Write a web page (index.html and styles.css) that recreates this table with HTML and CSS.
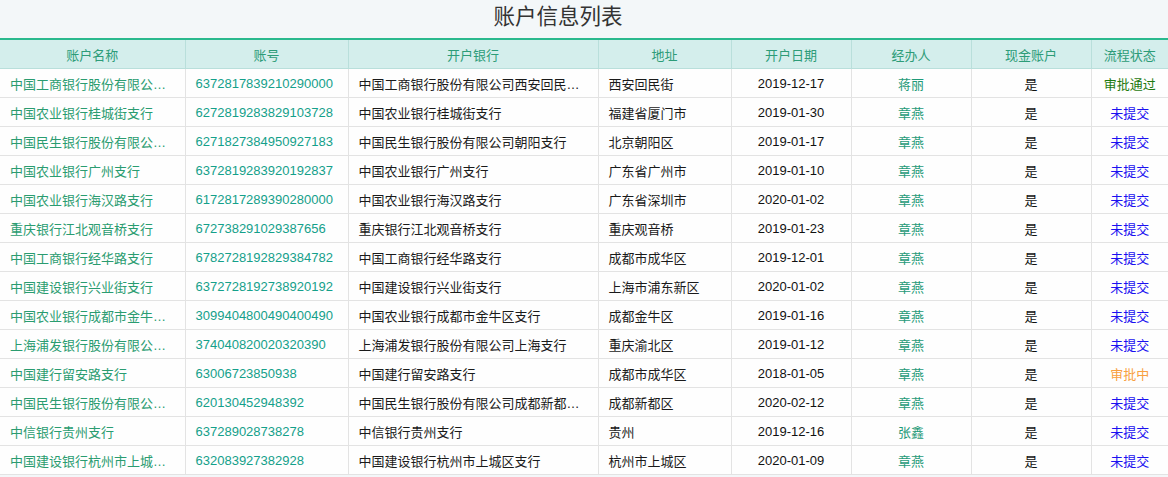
FILE: index.html
```html
<!DOCTYPE html>
<html lang="zh-CN">
<head>
<meta charset="utf-8">
<title>账户信息列表</title>
<link rel="stylesheet" href="styles.css">
</head>
<body>
<div class="page">
  <h1 class="title">账户信息列表</h1>
  <table class="grid">
    <colgroup>
      <col class="c1"><col class="c2"><col class="c3"><col class="c4"><col class="c5"><col class="c6"><col class="c7"><col class="c8">
    </colgroup>
    <thead>
      <tr>
        <th>账户名称</th><th>账号</th><th>开户银行</th><th>地址</th><th>开户日期</th><th>经办人</th><th>现金账户</th><th>流程状态</th>
      </tr>
    </thead>
    <tbody>
      <tr><td class="name">中国工商银行股份有限公司西安回民街支行</td><td class="acct">6372817839210290000</td><td class="bank">中国工商银行股份有限公司西安回民街支行</td><td class="addr">西安回民街</td><td class="date">2019-12-17</td><td class="person">蒋丽</td><td class="cash">是</td><td class="status ok">审批通过</td></tr>
      <tr><td class="name">中国农业银行桂城街支行</td><td class="acct">6272819283829103728</td><td class="bank">中国农业银行桂城街支行</td><td class="addr">福建省厦门市</td><td class="date">2019-01-30</td><td class="person">章燕</td><td class="cash">是</td><td class="status todo">未提交</td></tr>
      <tr><td class="name">中国民生银行股份有限公司朝阳支行</td><td class="acct">6271827384950927183</td><td class="bank">中国民生银行股份有限公司朝阳支行</td><td class="addr">北京朝阳区</td><td class="date">2019-01-17</td><td class="person">章燕</td><td class="cash">是</td><td class="status todo">未提交</td></tr>
      <tr><td class="name">中国农业银行广州支行</td><td class="acct">6372819283920192837</td><td class="bank">中国农业银行广州支行</td><td class="addr">广东省广州市</td><td class="date">2019-01-10</td><td class="person">章燕</td><td class="cash">是</td><td class="status todo">未提交</td></tr>
      <tr><td class="name">中国农业银行海汉路支行</td><td class="acct">6172817289390280000</td><td class="bank">中国农业银行海汉路支行</td><td class="addr">广东省深圳市</td><td class="date">2020-01-02</td><td class="person">章燕</td><td class="cash">是</td><td class="status todo">未提交</td></tr>
      <tr><td class="name">重庆银行江北观音桥支行</td><td class="acct">672738291029387656</td><td class="bank">重庆银行江北观音桥支行</td><td class="addr">重庆观音桥</td><td class="date">2019-01-23</td><td class="person">章燕</td><td class="cash">是</td><td class="status todo">未提交</td></tr>
      <tr><td class="name">中国工商银行经华路支行</td><td class="acct">6782728192829384782</td><td class="bank">中国工商银行经华路支行</td><td class="addr">成都市成华区</td><td class="date">2019-12-01</td><td class="person">章燕</td><td class="cash">是</td><td class="status todo">未提交</td></tr>
      <tr><td class="name">中国建设银行兴业街支行</td><td class="acct">6372728192738920192</td><td class="bank">中国建设银行兴业街支行</td><td class="addr">上海市浦东新区</td><td class="date">2020-01-02</td><td class="person">章燕</td><td class="cash">是</td><td class="status todo">未提交</td></tr>
      <tr><td class="name">中国农业银行成都市金牛区支行</td><td class="acct">3099404800490400490</td><td class="bank">中国农业银行成都市金牛区支行</td><td class="addr">成都金牛区</td><td class="date">2019-01-16</td><td class="person">章燕</td><td class="cash">是</td><td class="status todo">未提交</td></tr>
      <tr><td class="name">上海浦发银行股份有限公司上海支行</td><td class="acct">374040820020320390</td><td class="bank">上海浦发银行股份有限公司上海支行</td><td class="addr">重庆渝北区</td><td class="date">2019-01-12</td><td class="person">章燕</td><td class="cash">是</td><td class="status todo">未提交</td></tr>
      <tr><td class="name">中国建行留安路支行</td><td class="acct">63006723850938</td><td class="bank">中国建行留安路支行</td><td class="addr">成都市成华区</td><td class="date">2018-01-05</td><td class="person">章燕</td><td class="cash">是</td><td class="status pending">审批中</td></tr>
      <tr><td class="name">中国民生银行股份有限公司成都新都区支行</td><td class="acct">620130452948392</td><td class="bank">中国民生银行股份有限公司成都新都区支行</td><td class="addr">成都新都区</td><td class="date">2020-02-12</td><td class="person">章燕</td><td class="cash">是</td><td class="status todo">未提交</td></tr>
      <tr><td class="name">中信银行贵州支行</td><td class="acct">637289028738278</td><td class="bank">中信银行贵州支行</td><td class="addr">贵州</td><td class="date">2019-12-16</td><td class="person">张鑫</td><td class="cash">是</td><td class="status todo">未提交</td></tr>
      <tr><td class="name">中国建设银行杭州市上城区支行</td><td class="acct">632083927382928</td><td class="bank">中国建设银行杭州市上城区支行</td><td class="addr">杭州市上城区</td><td class="date">2020-01-09</td><td class="person">章燕</td><td class="cash">是</td><td class="status todo">未提交</td></tr>
    </tbody>
  </table>
</div>
</body>
</html>
```

FILE: styles.css
```css
html, body {
  margin: 0;
  padding: 0;
  background: #f3f7f9;
}

body {
  font-family: "Liberation Sans", "Noto Sans CJK SC", sans-serif;
  font-size: 13px;
  color: #222;
}

.page {
  width: 1168px;
}

.title {
  margin: 0;
  height: 38px;
  line-height: 30px;
  padding-right: 52px;
  text-align: center;
  font-size: 21.5px;
  font-weight: normal;
  color: #333;
  font-family: "Noto Sans CJK SC", sans-serif;
}

.grid {
  width: 1168px;
  table-layout: fixed;
  border-collapse: collapse;
  border-top: 2px solid #2ab98e;
}

.c1 { width: 185px; }
.c2 { width: 163px; }
.c3 { width: 250px; }
.c4 { width: 133px; }
.c5 { width: 120px; }
.c6 { width: 120px; }
.c7 { width: 120px; }
.c8 { width: 77px; }

.grid th {
  height: 28px;
  padding: 0;
  background: #d4eeec;
  color: #2d9c78;
  font-weight: normal;
  text-align: center;
  border-left: 1px solid #b9dfdb;
  border-bottom: 1px solid #b9dfdb;
}

.grid th:first-child,
.grid td:first-child {
  border-left: none;
}

.grid td {
  height: 28px;
  padding: 0 10px;
  background: #fefefe;
  border-left: 1px solid #e3e3e3;
  border-bottom: 1px solid #e3e3e3;
  white-space: nowrap;
  overflow: hidden;
  text-overflow: ellipsis;
  vertical-align: middle;
}

.name { color: #2a9c70; }
.acct { color: #14a08a; }
.bank { color: #1a1a1a; }
.addr { color: #1a1a1a; }
.date { text-align: center; color: #111; }
.person { text-align: center; color: #1f9a78; }
.cash { text-align: center; color: #111; }
.status { text-align: center; }
.ok { color: #1e7a10; }
.todo { color: #1a10f0; }
.pending { color: #f8a040; }
```
